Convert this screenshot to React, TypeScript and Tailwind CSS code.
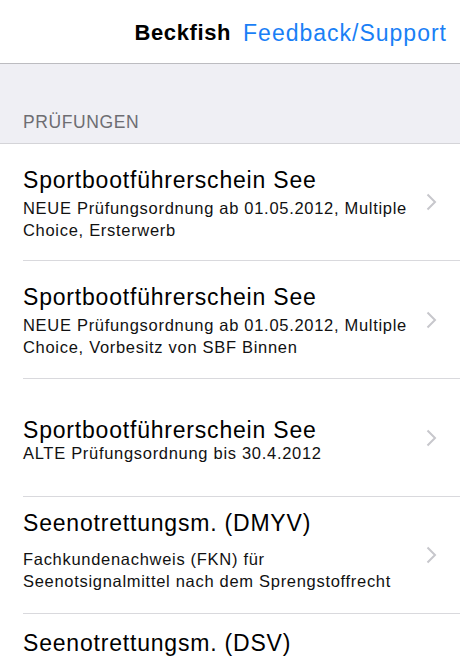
import React from "react";

const Chevron = () => (
  <svg width="11" height="18" viewBox="0 0 11 18" className="block">
    <path d="M1.5 1.5 L9 9 L1.5 16.5" fill="none" stroke="#c7c7cc" strokeWidth="2" />
  </svg>
);

type RowProps = {
  h: string;
  pt: string;
  gap: string;
  title: string;
  lines: string[];
  last?: boolean;
};

function Row({ h, pt, gap, title, lines, last }: RowProps) {
  return (
    <div className={`pl-[23px] bg-white ${h}`}>
      <div className={`flex h-full pr-[23px] ${last ? "" : "border-b border-[#d9d9dd]"}`}>
        <div className={`flex-1 ${pt}`}>
          <div className="text-[23px] leading-[26px] tracking-[0.8px] text-black whitespace-nowrap">{title}</div>
          {lines.length > 0 && (
            <div className={`${gap} text-[16.5px] leading-[22px] tracking-[0.7px] text-[#111] whitespace-nowrap`}>
              {lines.map((l, i) => (
                <div key={i}>{l}</div>
              ))}
            </div>
          )}
        </div>
        {!last && (
          <div className="self-center">
            <Chevron />
          </div>
        )}
      </div>
    </div>
  );
}

export default function App() {
  return (
    <div className="w-[460px] h-[661px] overflow-hidden bg-white font-['Liberation_Sans',Arial,sans-serif]">
      <div className="h-[64px] border-b border-[#bcbcc0] bg-white flex justify-end pr-[13px] pt-[20px]">
        <span className="text-[22px] leading-[26px] font-bold tracking-[0.6px] text-black">Beckfish</span>
        <span className="ml-[12px] text-[23px] leading-[26px] tracking-[1px] text-[#1a7ff6]">Feedback/Support</span>
      </div>
      <div className="h-[79px] bg-[#efeff4] pl-[23px] pt-[48px]">
        <div className="text-[17.5px] leading-[20px] tracking-[0.6px] text-[#6d6d72]">PRÜFUNGEN</div>
      </div>
      <div className="border-t border-[#d4d4d8]">
        <Row
          h="h-[117px]"
          pt="pt-[23px]"
          gap="mt-[4px]"
          title="Sportbootführerschein See"
          lines={["NEUE Prüfungsordnung ab 01.05.2012, Multiple", "Choice, Ersterwerb"]}
        />
        <Row
          h="h-[118px]"
          pt="pt-[23px]"
          gap="mt-[4px]"
          title="Sportbootführerschein See"
          lines={["NEUE Prüfungsordnung ab 01.05.2012, Multiple", "Choice, Vorbesitz von SBF Binnen"]}
        />
        <Row
          h="h-[118px]"
          pt="pt-[38px]"
          gap="-mt-[1px]"
          title="Sportbootführerschein See"
          lines={["ALTE Prüfungsordnung bis 30.4.2012"]}
        />
        <Row
          h="h-[117px]"
          pt="pt-[13px]"
          gap="mt-[12px]"
          title="Seenotrettungsm. (DMYV)"
          lines={["Fachkundenachweis (FKN) für", "Seenotsignalmittel nach dem Sprengstoffrecht"]}
        />
        <Row
          h="h-[47px]"
          pt="pt-[16px]"
          gap="mt-[4px]"
          title="Seenotrettungsm. (DSV)"
          lines={[]}
          last
        />
      </div>
    </div>
  );
}
